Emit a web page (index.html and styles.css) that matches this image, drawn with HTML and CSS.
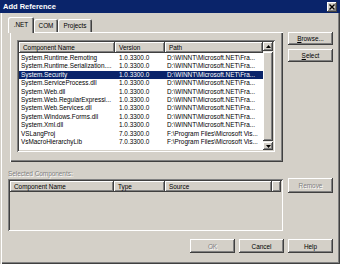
FILE: index.html
```html
<!DOCTYPE html>
<html lang="en">

<head>
    <meta charset="UTF-8">
    <title>Add Reference</title>
    <link rel="stylesheet" href="styles.css">
</head>

<body>
    <div class="window">
        <!-- Title bar -->
        <div class="titlebar">
            <span class="title">Add Reference</span>
            <span class="close">
                <svg width="6" height="6" viewBox="0 0 6 6">
                    <path d="M0.5 0.5 L5.5 5.5 M5.5 0.5 L0.5 5.5" stroke="#000" stroke-width="1.4" />
                </svg>
            </span>
        </div>

        <div class="dialog">
            <div class="top">
                <!-- Tab control -->
                <div class="tabctl">
                    <div class="tabs">
                        <div class="tab active">.NET</div>
                        <div class="tab com">COM</div>
                        <div class="tab projects">Projects</div>
                    </div>
                    <div class="page">
                        <div class="listview">
                            <div class="lv-main">
                                <div class="header">
                                    <div class="hcell c-name">Component Name</div>
                                    <div class="hcell c-ver">Version</div>
                                    <div class="hcell c-path">Path</div>
                                </div>
                                <div class="rows">
                                    <div class="row"><span class="c-name">System.Runtime.Remoting</span><span class="c-ver">1.0.3300.0</span><span class="c-path">D:\WINNT\Microsoft.NET\Fra...</span></div>
                                    <div class="row"><span class="c-name">System.Runtime.Serialization....</span><span class="c-ver">1.0.3300.0</span><span class="c-path">D:\WINNT\Microsoft.NET\Fra...</span></div>
                                    <div class="row selected"><span class="c-name">System.Security</span><span class="c-ver">1.0.3300.0</span><span class="c-path">D:\WINNT\Microsoft.NET\Fra...</span></div>
                                    <div class="row"><span class="c-name">System.ServiceProcess.dll</span><span class="c-ver">1.0.3300.0</span><span class="c-path">D:\WINNT\Microsoft.NET\Fra...</span></div>
                                    <div class="row"><span class="c-name">System.Web.dll</span><span class="c-ver">1.0.3300.0</span><span class="c-path">D:\WINNT\Microsoft.NET\Fra...</span></div>
                                    <div class="row"><span class="c-name">System.Web.RegularExpressi...</span><span class="c-ver">1.0.3300.0</span><span class="c-path">D:\WINNT\Microsoft.NET\Fra...</span></div>
                                    <div class="row"><span class="c-name">System.Web.Services.dll</span><span class="c-ver">1.0.3300.0</span><span class="c-path">D:\WINNT\Microsoft.NET\Fra...</span></div>
                                    <div class="row"><span class="c-name">System.Windows.Forms.dll</span><span class="c-ver">1.0.3300.0</span><span class="c-path">D:\WINNT\Microsoft.NET\Fra...</span></div>
                                    <div class="row"><span class="c-name">System.Xml.dll</span><span class="c-ver">1.0.3300.0</span><span class="c-path">D:\WINNT\Microsoft.NET\Fra...</span></div>
                                    <div class="row"><span class="c-name">VSLangProj</span><span class="c-ver">7.0.3300.0</span><span class="c-path">F:\Program Files\Microsoft Vis...</span></div>
                                    <div class="row"><span class="c-name">VsMacroHierarchyLib</span><span class="c-ver">7.0.3300.0</span><span class="c-path">F:\Program Files\Microsoft Vis...</span></div>
                                </div>
                            </div>
                            <!-- Vertical scrollbar -->
                            <div class="scrollbar">
                                <div class="sb-btn up">
                                    <svg width="5" height="3" viewBox="0 0 5 3"><polygon points="2.5,0 5,3 0,3" fill="#000" /></svg>
                                </div>
                                <div class="sb-track">
                                    <div class="sb-thumb"></div>
                                </div>
                                <div class="sb-btn down">
                                    <svg width="5" height="3" viewBox="0 0 5 3"><polygon points="0,0 5,0 2.5,3" fill="#000" /></svg>
                                </div>
                            </div>
                        </div>
                    </div>
                </div>

                <div class="side">
                    <button class="btn"><u>B</u>rowse...</button>
                    <button class="btn"><u>S</u>elect</button>
                </div>
            </div>

            <div class="sel-label">Selected Components:</div>

            <div class="lower">
                <div class="listview small">
                    <div class="header">
                        <div class="hcell l-name">Component Name</div>
                        <div class="hcell l-type">Type</div>
                        <div class="hcell l-src">Source</div>
                        <div class="hcell l-fill"></div>
                    </div>
                </div>
                <button class="btn remove disabled">Remove</button>
            </div>

            <div class="footer">
                <button class="btn disabled">OK</button>
                <button class="btn">Cancel</button>
                <button class="btn">Help</button>
            </div>
        </div>
    </div>
</body>

</html>
```

FILE: styles.css
```css
/* Reset */
* {
    margin: 0;
    padding: 0;
    box-sizing: border-box;
}

body {
    width: 340px;
    height: 264px;
    overflow: hidden;
    font-family: "Liberation Sans", Arial, sans-serif;
    font-size: 6.4px;
    color: #000;
}

/* Window frame */
.window {
    width: 340px;
    height: 264px;
    background-color: #d4d0c8;
    display: flex;
    flex-direction: column;
    box-shadow: inset 1px 0 #d4d0c8, inset 2px 0 #fff, inset -1px -1px #404040, inset -2px -2px #808080;
}

.titlebar {
    height: 13px;
    background-color: #0a246a;
    display: flex;
    align-items: center;
    justify-content: space-between;
    padding: 0 3px 0 3px;
}

.title {
    color: #fff;
    font-weight: bold;
    font-size: 7.5px;
    line-height: 13px;
}

.close {
    width: 10px;
    height: 10px;
    background-color: #d4d0c8;
    display: flex;
    align-items: center;
    justify-content: center;
    box-shadow: inset -1px -1px #404040, inset 1px 1px #fff, inset -2px -2px #808080;
}

.dialog {
    flex: 1;
    display: flex;
    flex-direction: column;
    padding: 4px 7px 0 8px;
}

.top {
    display: flex;
    gap: 5px;
}

/* Tab control */
.tabctl {
    width: 273px;
    margin-left: 2px;
}

.tabs {
    display: flex;
    align-items: flex-end;
    height: 15px;
}

.tab {
    height: 13px;
    line-height: 13px;
    text-align: center;
    background-color: #d4d0c8;
    border-radius: 2px 2px 0 0;
    box-shadow: inset 1px 1px #fff, inset -1px 0 #404040, inset -2px 0 #808080;
}

.tab.active {
    width: 26px;
    height: 16px;
    line-height: 15px;
    margin-left: -2px;
    margin-bottom: -1px;
    position: relative;
    z-index: 1;
}

.tab.com {
    width: 24px;
}

.tab.projects {
    width: 34px;
}

.page {
    height: 130px;
    padding: 8px 8px 10px 7px;
    box-shadow: inset 1px 1px #fff, inset -1px -1px #404040, inset -2px -2px #808080;
}

/* List views */
.listview {
    display: flex;
    width: 258px;
    height: 112px;
    padding: 2px;
    background-color: #fff;
    box-shadow: inset 1px 1px #808080, inset -1px -1px #fff, inset 2px 2px #404040, inset -2px -2px #d4d0c8;
}

.lv-main {
    flex: 1;
    display: flex;
    flex-direction: column;
}

.header {
    display: flex;
    height: 11px;
}

.hcell {
    height: 11px;
    line-height: 11px;
    padding-left: 4px;
    white-space: nowrap;
    overflow: hidden;
    background-color: #d4d0c8;
    box-shadow: inset -1px -1px #404040, inset 1px 1px #fff, inset -2px -2px #808080;
}

.hcell.c-name { width: 96px; }
.hcell.c-ver { width: 50px; }
.hcell.c-path { width: 98px; }

.rows {
    padding-top: 1px;
}

.row {
    display: flex;
    height: 8.4px;
    line-height: 8.4px;
    white-space: nowrap;
}

.row span {
    overflow: hidden;
}

.row .c-name { width: 96px; padding-left: 2px; }
.row .c-ver { width: 50px; padding-left: 4px; }
.row .c-path { width: 98px; padding-left: 2px; }

.row.selected {
    background-color: #0a246a;
    color: #fff;
}

/* Scrollbar */
.scrollbar {
    width: 10px;
    display: flex;
    flex-direction: column;
    background-color: #ebe9e4;
}

.sb-btn {
    display: flex;
    align-items: center;
    justify-content: center;
    background-color: #d4d0c8;
    box-shadow: inset -1px -1px #404040, inset 1px 1px #fff, inset -2px -2px #808080;
}

.sb-btn.up { height: 9px; }
.sb-btn.down { height: 8px; }

.sb-track {
    flex: 1;
    display: flex;
    flex-direction: column;
    padding: 1px 0 1px 0;
}

.sb-thumb {
    flex: 1;
    background-color: #d4d0c8;
    box-shadow: inset -1px -1px #404040, inset 1px 1px #fff, inset -2px -2px #808080;
}

/* Side buttons */
.side {
    display: flex;
    flex-direction: column;
    gap: 4px;
    padding-top: 15px;
}

.btn {
    width: 45px;
    height: 13px;
    border: none;
    font-family: "Liberation Sans", Arial, sans-serif;
    font-size: 6.4px;
    color: #000;
    background-color: #d4d0c8;
    box-shadow: inset -1px -1px #404040, inset 1px 1px #fff, inset -2px -2px #808080;
}

.btn.disabled {
    color: #808080;
    text-shadow: 1px 1px #fff;
}

/* Selected components */
.sel-label {
    margin-top: 7px;
    height: 10px;
    line-height: 10px;
    color: #808080;
    text-shadow: 1px 1px #fff;
}

.lower {
    display: flex;
    gap: 5px;
}

.listview.small {
    display: block;
    width: 275px;
    height: 52px;
    background-color: #d4d0c8;
}

.hcell.l-name { width: 104px; }
.hcell.l-type { width: 51px; }
.hcell.l-src { width: 107px; }
.hcell.l-fill { width: 9px; }

.btn.remove {
    height: 15px;
    margin-top: -1px;
}

/* Dialog buttons */
.footer {
    display: flex;
    justify-content: flex-end;
    gap: 4px;
    margin-top: 8px;
}

.footer .btn {
    height: 14px;
}
```
